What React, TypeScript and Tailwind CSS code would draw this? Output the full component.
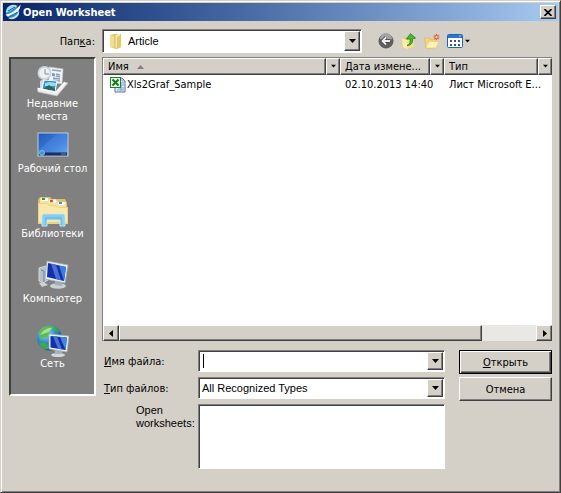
import { useId, type ReactNode } from 'react';

const raised =
  'border border-t-white border-l-white border-r-[#404040] border-b-[#404040] bg-[#d4d0c8] shadow-[inset_-1px_-1px_0_#808080]';
const sunken =
  'border border-t-[#808080] border-l-[#808080] border-r-white border-b-white bg-white shadow-[inset_1px_1px_0_#404040]';

function Arrow({ dir = 'down', size = 7 }: { dir?: 'down' | 'left' | 'right'; size?: number }) {
  const points = { down: '0,1 7,1 3.5,5', left: '5,0 5,7 1,3.5', right: '2,0 2,7 6,3.5' }[dir];
  return (
    <svg width={size} height={size} viewBox="0 0 7 7" aria-hidden="true" className="shrink-0">
      <polygon points={points} fill="#000" />
    </svg>
  );
}

function AppIcon() {
  return (
    <svg width="16" height="16" viewBox="0 0 16 16" aria-hidden="true" className="shrink-0">
      <circle cx="7.5" cy="8" r="6.8" fill="#2a8cc8" />
      <path d="M1.500 5.500C3 1 9-.5 12.500 2L6 6.500 1 9Z" fill="#a8dcf4" />
      <path d="M.5 10.500C6 10 11 6 15.500.5 15.500 7 10 11.500 2.500 12.500Z" fill="#f4fbff" />
      <path d="M3 14C9 14 12 11 14 7c1 5-4 9-9 8Z" fill="#c3e4f8" />
      <path d="M3 7 10 3M4 12.500 12 8.500" stroke="#0a5a9e" strokeWidth="1" />
    </svg>
  );
}

function FolderIcon() {
  return (
    <svg width="16" height="16" viewBox="0 0 16 16" aria-hidden="true" className="shrink-0">
      <path d="M2 2 6 1h7v13l-5 2-6-2Z" fill="#dfc364" />
      <path d="M2 2l5 1v12l-5-1Z" fill="#f3de8e" />
      <path d="M7 3 10 1h2v13l-5 1Z" fill="#f9ecb5" />
      <path d="M9 4 13 2v12l-4 2Z" fill="#e4c969" />
      <path d="M7 3v12" stroke="#c6a044" strokeWidth=".7" />
    </svg>
  );
}

function ExcelIcon() {
  return (
    <svg width="16" height="16" viewBox="0 0 16 16" aria-hidden="true" className="shrink-0">
      <path d="M5 1h7l3 3v11H5Z" fill="#eaf2ff" stroke="#4a6fb4" />
      <path d="M12 1v3h3M10 6h4M10 8h4M8 11h6M7 13h7M11 5v9" fill="none" stroke="#83a2d0" />
      <rect x=".5" y=".5" width="10" height="10" fill="#e5f4dc" stroke="#25802d" />
      <path d="m2.500 2.500 6 6m0-6-6 6" stroke="#16791e" strokeWidth="2" />
    </svg>
  );
}

function BackIcon() {
  return (
    <svg width="16" height="16" viewBox="0 0 16 16" aria-hidden="true">
      <circle cx="8" cy="8" r="7" fill="#606060" stroke="#555" />
      <path d="M2 6a6 6 0 0 1 12 0Q8 8 2 6" fill="#a4a4a4" />
      <path d="M12 8H4.500m3.500-3.500L4.500 8 8 11.500" fill="none" stroke="#444" strokeWidth="3.400" />
      <path d="M12 8H4.500m3.500-3.500L4.500 8 8 11.500" fill="none" stroke="#eee" strokeWidth="1.800" />
    </svg>
  );
}

function UpIcon() {
  return (
    <svg width="16" height="16" viewBox="0 0 16 16" aria-hidden="true">
      <path d="M1 5 5 4l8 1v9l-6 2-5-2Z" fill="#e5c968" />
      <path d="m1 5 5 2v9l-4-2Z" fill="#fff0a8" />
      <path d="m6 7 7-2v9l-7 2Z" fill="#f7e08a" />
      <path d="M6 12.500c3-1.500 3.500-3.500 3-6.500H5.500L9.500.7 14.500 5l-2.800.7c.5 4-1.700 6.800-5.700 6.800Z" fill="#4cb838" stroke="#1e7a1b" strokeWidth=".8" />
    </svg>
  );
}

function NewFolderIcon() {
  return (
    <svg width="16" height="16" viewBox="0 0 16 16" aria-hidden="true">
      <path d="M.5 5h5l1 1.500h5V10L9 15H2Z" fill="#f2d47a" stroke="#dfb95a" strokeWidth=".7" />
      <path d="m2 15 2.500-6.500h10.500L12 15Z" fill="#fff2b2" stroke="#e8c669" strokeWidth=".6" />
      <path d="M12.500 1v6M9.500 4h6M10.400 1.900l4.200 4.200m0-4.200-4.200 4.200" stroke="#e2543a" strokeWidth="1.100" />
      <circle cx="12.500" cy="4" r="1.200" fill="#ffd6a0" />
    </svg>
  );
}

function ViewIcon() {
  return (
    <svg width="16" height="14" viewBox="0 0 16 14" aria-hidden="true">
      <rect x=".5" y=".5" width="15" height="13" rx="1" fill="#fff" stroke="#1766ba" />
      <path d="M1 2.500h14" stroke="#2877cc" strokeWidth="3" />
      <path d="M3 6h2v2H3zM7 6h2v2H7zM11 6h2v2h-2zM3 10h2v2H3zM7 10h2v2H7zM11 10h2v2h-2z" fill="#35577e" />
      <path d="M12 2h2" stroke="#ffbd89" />
    </svg>
  );
}

function RecentIcon() {
  return (
    <svg width="32" height="32" viewBox="0 0 32 32" aria-hidden="true">
      <path d="m12 2 14 2-1 15-13-2Z" fill="#f2f5f8" stroke="#c3cad0" strokeWidth=".7" />
      <path d="m15 5 9 1M19 9l4 1m-4 1 4 1M16 13l7 1m-7 1 7 1" stroke="#8da3b8" strokeWidth="1.300" />
      <path d="m15 8 3 .5v3l-3-.5Z" fill="#6d9cc6" />
      <circle cx="7.500" cy="8" r="7" fill="#c9d2d7" />
      <circle cx="7.500" cy="8" r="5.300" fill="#eef1f3" />
      <path d="M8 4v5h4" fill="none" stroke="#7c8e9b" />
      <path d="m3 16 4-2 3 9-7 4Z" fill="#d5d9db" />
      <path d="m7 15 13 1-2 10-13-2Z" fill="#2f8fd0" stroke="#eef7ff" strokeWidth="1.200" />
      <path d="m8 18 5-1 6 1v3H8Z" fill="#9adbf1" />
      <path d="m6 24 6-4 6 4v2Z" fill="#276a5a" />
      <path d="m0 23 18 4 9-10 4 1-11 13L1 27Z" fill="#ececec" stroke="#b4b6b6" strokeWidth=".7" />
      <path d="m1 23.500 18 4 9-10" fill="none" stroke="#fff" strokeWidth="1.500" />
    </svg>
  );
}

function DesktopIcon() {
  return (
    <svg width="32" height="32" viewBox="0 0 32 32" aria-hidden="true">
      <defs>
        <linearGradient id="desk" x2="1" y2="1">
          <stop stopColor="#2257b8" />
          <stop offset=".6" stopColor="#3f7fdc" />
          <stop offset="1" stopColor="#6ca6ee" />
        </linearGradient>
      </defs>
      <rect x="1" y="3" width="30" height="23" fill="url(#desk)" stroke="#b9cbe4" />
      <path d="m2 20 18-16h10v18H2Z" fill="#69aaf5" opacity=".2" />
      <path d="M2 24h28" stroke="#1c2f58" strokeWidth="3" />
      <path d="M24 24h5" stroke="#6688a2" />
      <circle cx="5" cy="23" r="2.500" fill="#3c9cc4" stroke="#9fd6e6" strokeWidth=".7" />
    </svg>
  );
}

function LibrariesIcon() {
  return (
    <svg width="32" height="32" viewBox="0 0 32 32" aria-hidden="true">
      <path d="M1 5 3 2h10l2 2h13l2 4v21H1Z" fill="#dfc06a" />
      <path d="M3 3h8l1 2h8l1 2h8v20H3Z" fill="#f6e3a0" />
      <path d="M4 4.500h7M12 6h7M21 8.500h7" stroke="#fff" strokeWidth="3" />
      <path d="M5 4h3" stroke="#2b9f43" strokeWidth="2" />
      <path d="M13 6h3" stroke="#db5530" strokeWidth="2.500" />
      <path d="M22 8h3" stroke="#3599d0" strokeWidth="2" />
      <path d="M1 8h9l2 2h7l2 2h10v17H1Z" fill="#ecd382" />
      <path d="M2 9h8l2 2h7l2 2h9v14H2Z" fill="#f9e8ab" />
      <path d="M5 31V21q0-2 2-2h19q2 0 2 2v10h-5v-6H10v6Z" fill="#73c0e4" stroke="#c3ecf8" />
      <path d="M7 30v-9h19v9" fill="none" stroke="#9bdcf2" strokeWidth="1.200" />
    </svg>
  );
}

function ComputerIcon() {
  return (
    <svg width="32" height="32" viewBox="0 0 32 32" aria-hidden="true">
      <path d="m2 8 7-2 2 14-5 3-4-2Z" fill="#b5bfc5" stroke="#e0e5e8" strokeWidth=".8" />
      <path d="m4 10 3 1v11" fill="none" stroke="#6f8592" />
      <ellipse cx="21" cy="26" rx="8" ry="2.800" fill="#c9d1d6" />
      <path d="m18 21 7 2v3l-7-1Z" fill="#a3afb7" />
      <path d="m10 1 21 4-3 18L8 19Z" fill="#e6ecf1" stroke="#a6b0b9" strokeWidth=".7" />
      <path d="m11 3 18 4-2 14-17-4Z" fill="#1230a8" />
      <path d="m22 5.500 7 1.500-2 14Z" fill="#3f7ee0" />
      <path d="m14 3.700 5 1.100 5 15.500-5-1.200Z" fill="#4a6fd6" />
      <path d="m2 23 5-1 4 3-6 2Z" fill="#cdd3d7" />
    </svg>
  );
}

function NetworkIcon() {
  return (
    <svg width="32" height="32" viewBox="0 0 32 32" aria-hidden="true">
      <defs>
        <radialGradient id="globe" cx=".35" cy=".3" r=".75">
          <stop stopColor="#9be0f4" />
          <stop offset=".5" stopColor="#2f8fd0" />
          <stop offset="1" stopColor="#15508f" />
        </radialGradient>
      </defs>
      <circle cx="12.500" cy="13" r="12.500" fill="url(#globe)" />
      <path d="M2 7C6 1 11 0 17 2l-5 6-2 5-4-1-2 4Z" fill="#5fbb4c" />
      <path d="m2 18 5-1 5 4-1 3C6 25 3 22 2 18ZM17 1l6 6-6-1Z" fill="#3fa84e" />
      <path d="M3 10C7 3 12 3 15 3l-3 4Z" fill="#d0f4c8" opacity=".6" />
      <ellipse cx="21" cy="30" rx="7" ry="2" fill="#d3d8dc" />
      <path d="m18 25 7 1v3h-7Z" fill="#aab3ba" />
      <path d="m12 9 20 2-2 16-18-3Z" fill="#e9eff4" stroke="#a3adb5" strokeWidth=".7" />
      <path d="m13.500 11 16.500 1.500-1.500 12.500-15-2.500Z" fill="#1230a8" />
      <path d="m23 12 7 .5-1.500 12.500Z" fill="#438adf" />
      <path d="m16 11.200 4 .4 5 12.800-4-.7Z" fill="#4a72d4" />
    </svg>
  );
}

const places = [
  { label: 'Недавние места', icon: <RecentIcon /> },
  { label: 'Рабочий стол', icon: <DesktopIcon /> },
  { label: 'Библиотеки', icon: <LibrariesIcon /> },
  { label: 'Компьютер', icon: <ComputerIcon /> },
  { label: 'Сеть', icon: <NetworkIcon /> },
];

function ComboButton() {
  return (
    <span className={`pointer-events-none flex w-4 shrink-0 items-center justify-center self-stretch ${raised}`}>
      <Arrow />
    </span>
  );
}

function HeaderCell({ label, sorted }: { label: string; sorted?: boolean }) {
  return (
    <th scope="col" className="p-0 font-normal">
      <div className="flex h-[17px]">
        <button className={`flex min-w-0 flex-1 items-center gap-2 pl-1 text-left ${raised}`}>
          <span className="truncate">{label}</span>
          {sorted && (
            <svg width="7" height="4" viewBox="0 0 7 4" aria-hidden="true">
              <path d="M0 4 3.500 0 7 4Z" fill="#808080" />
            </svg>
          )}
        </button>
        <button aria-label={`Фильтр: ${label}`} className={`flex w-[14px] items-center justify-center ${raised}`}>
          <Arrow size={5} />
        </button>
      </div>
    </th>
  );
}

function ToolButton({ label, children }: { label: string; children: ReactNode }) {
  return (
    <button aria-label={label} className="flex h-5 items-center gap-[2px]">
      {children}
    </button>
  );
}

export default function App() {
  const id = useId();
  return (
    <main className="flex min-h-screen flex-col border border-t-[#d4d0c8] border-r-[#404040] border-b-[#404040] border-l-[#d4d0c8] bg-[#d4d0c8] p-[2px] font-['DejaVu_Sans_Condensed','DejaVu_Sans',sans-serif] text-[11px] leading-[13px] text-black shadow-[inset_1px_1px_0_#fff,inset_-1px_-1px_0_#808080]">
      <header className="flex h-[18px] items-center gap-[2px] bg-linear-to-r from-[#0a246a] to-[#a6caf0] pr-[2px] pl-[2px] text-white">
        <AppIcon />
        <h1 className="flex-1 font-bold">Open Worksheet</h1>
        <button aria-label="Закрыть" className={`flex h-[14px] w-4 items-center justify-center ${raised}`}>
          <svg width="8" height="7" viewBox="0 0 8 7" aria-hidden="true">
            <path d="m.5 0 7 7m0-7-7 7" stroke="#000" strokeWidth="1.600" />
          </svg>
        </button>
      </header>

      <div className="flex items-center pt-2 pl-[6px]">
        <label htmlFor={`${id}-folder`} className="w-[93px] pr-[7px] text-right">
          Пап<u>к</u>а:
        </label>
        <div className={`flex h-6 w-[260px] items-center p-px ${sunken}`}>
          <span className="pl-1">
            <FolderIcon />
          </span>
          <select id={`${id}-folder`} className="min-w-0 flex-1 appearance-none bg-transparent pl-1 font-['Liberation_Sans',sans-serif] text-[11px] outline-none">
            <option>Article</option>
          </select>
          <ComboButton />
        </div>
        <div className="flex items-center gap-[7px] pl-4">
          <ToolButton label="Назад"><BackIcon /></ToolButton>
          <ToolButton label="На один уровень вверх"><UpIcon /></ToolButton>
          <ToolButton label="Создание новой папки"><NewFolderIcon /></ToolButton>
          <ToolButton label="Меню «Вид»"><ViewIcon /><Arrow size={5} /></ToolButton>
        </div>
      </div>

      <div className="flex items-start gap-[6px] pt-1 pr-[6px] pl-[6px]">
        <nav className="flex w-[87px] shrink-0 flex-col border-2 border-t-[#404040] border-r-white border-b-white border-l-[#404040] bg-[#808080] pt-[6px] pb-1 text-white">
          {places.map((place) => (
            <button key={place.label} className="flex h-[65px] flex-col items-center px-1 text-center">
              {place.icon}
              <span className={place.label === 'Недавние места' ? 'w-16' : 'whitespace-nowrap'}>{place.label}</span>
            </button>
          ))}
        </nav>

        <div className="min-w-0 flex-1">
          <section className="flex h-[284px] flex-col border-t border-l border-[#808080] bg-white">
            <div className="flex-1">
              <table className="w-full table-fixed border-collapse">
                <colgroup>
                  <col />
                  <col className="w-[104px]" />
                  <col className="w-[108px]" />
                </colgroup>
                <thead>
                  <tr>
                    <HeaderCell label="Имя" sorted />
                    <HeaderCell label="Дата измене..." />
                    <HeaderCell label="Тип" />
                  </tr>
                </thead>
                <tbody>
                  <tr className="h-[19px] whitespace-nowrap">
                    <td className="p-0 pl-[7px]">
                      <span className="flex items-center gap-px"><ExcelIcon />Xls2Graf_Sample</span>
                    </td>
                    <td className="p-0 pl-[5px]">02.10.2013 14:40</td>
                    <td className="p-0 pl-[5px]">Лист Microsoft E...</td>
                  </tr>
                </tbody>
              </table>
            </div>
            <div className="flex h-4 bg-[#eae8e4]">
              <button aria-label="Влево" className={`flex w-4 items-center justify-center ${raised}`}><Arrow dir="left" /></button>
              <div className={`w-[363px] ${raised}`} />
              <div className="flex-1" />
              <button aria-label="Вправо" className={`flex w-4 items-center justify-center ${raised}`}><Arrow dir="right" /></button>
            </div>
          </section>

          <div className="flex gap-[14px] pt-[9px]">
            <div className="grid flex-1 grid-cols-[96px_1fr] gap-y-[5px]">
              <label htmlFor={`${id}-name`} className="self-center pl-[2px]"><u>И</u>мя файла:</label>
              <div className={`flex h-[22px] items-center p-px ${sunken}`}>
                <span className="ml-[3px] h-[14px] w-px bg-black" />
                <input id={`${id}-name`} type="text" className="min-w-0 flex-1 bg-transparent outline-none" />
                <ComboButton />
              </div>
              <label htmlFor={`${id}-type`} className="self-center pl-[2px]"><u>Т</u>ип файлов:</label>
              <div className={`flex h-[22px] items-center p-px ${sunken}`}>
                <select id={`${id}-type`} className="min-w-0 flex-1 appearance-none bg-transparent pl-[2px] font-['Liberation_Sans',sans-serif] text-[11px] outline-none">
                  <option>All Recognized Types</option>
                </select>
                <ComboButton />
              </div>
              <label htmlFor={`${id}-open`} className="pl-[34px] font-['Liberation_Sans',sans-serif]">
                Open<br />worksheets:
              </label>
              <textarea id={`${id}-open`} className={`block h-[65px] w-full resize-none outline-none ${sunken}`} />
            </div>
            <div className="flex w-[93px] flex-col gap-[3px]">
              <button className="h-6 border border-black bg-[#d4d0c8] shadow-[inset_1px_1px_0_#fff,inset_-1px_-1px_0_#404040,inset_-2px_-2px_0_#808080]">
                <u>О</u>ткрыть
              </button>
              <button className={`h-6 ${raised}`}>Отмена</button>
            </div>
          </div>
        </div>
      </div>
    </main>
  );
}
